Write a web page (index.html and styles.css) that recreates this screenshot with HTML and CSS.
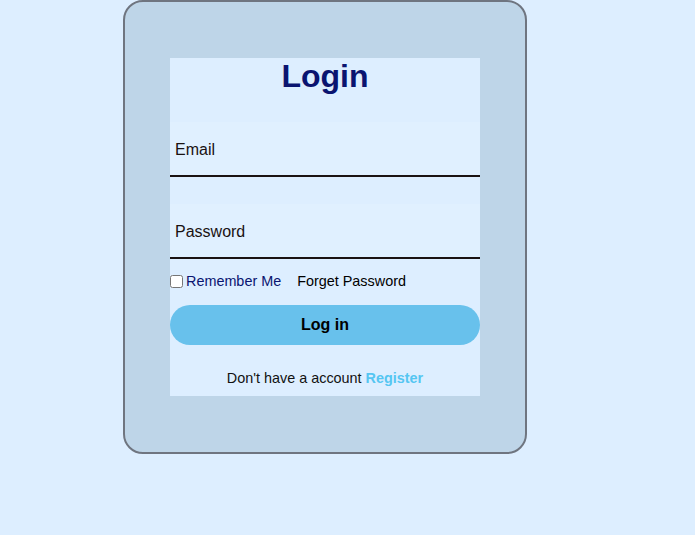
FILE: index.html
```html
<!DOCTYPE html>
<html>
<head>
<meta charset="utf-8">
<link rel="stylesheet" href="styles.css">
</head>
<body>
<div class="card">
  <form class="login">
    <h1 class="title">Login</h1>
    <input class="field field-email" type="email" placeholder="Email">
    <input class="field field-pass" type="password" placeholder="Password">
    <div class="options">
      <label class="remember"><input type="checkbox" class="check">Remember Me</label>
      <a class="forget">Forget Password</a>
    </div>
    <button type="button" class="btn">Log in</button>
    <p class="register">Don't have a account <a class="reg-link">Register</a></p>
  </form>
</div>
</body>
</html>
```

FILE: styles.css
```css
html, body {
  margin: 0;
  padding: 0;
  background: #ddeeff;
  font-family: "Liberation Sans", Arial, sans-serif;
}
.card {
  box-sizing: border-box;
  width: 404px;
  height: 454px;
  margin-left: 123px;
  background: #bed5e8;
  border: 2px solid #6f7580;
  border-radius: 20px;
  padding: 56px 45px;
}
.login {
  background: #ddeeff;
  display: flex;
  flex-direction: column;
  padding-bottom: 10px;
}
.title {
  margin: 0;
  font-size: 32px;
  line-height: 37px;
  text-align: center;
  color: #0a1470;
  font-weight: bold;
}
.field {
  box-sizing: border-box;
  width: 100%;
  height: 55px;
  border: none;
  border-bottom: 2px solid #1a1212;
  background: #e0f0ff;
  padding: 2px 5px 0;
  font-family: "Liberation Sans", Arial, sans-serif;
  font-size: 16px;
  color: #111;
  outline: none;
}
.field::placeholder {
  color: #1a1212;
  opacity: 1;
}
.field-email { margin-top: 27px; }
.field-pass { margin-top: 27px; }
.options {
  display: flex;
  align-items: center;
  margin-top: 14px;
  font-size: 14.4px;
  line-height: 17px;
}
.remember {
  display: flex;
  align-items: center;
  color: #0a1470;
}
.check {
  width: 13px;
  height: 13px;
  margin: 0 3px 0 0;
}
.forget {
  margin-left: 16px;
  color: #000;
}
.btn {
  margin-top: 15px;
  height: 40px;
  border: none;
  border-radius: 20px;
  background: #68c1ec;
  font-family: "Liberation Sans", Arial, sans-serif;
  font-weight: bold;
  font-size: 16px;
  color: #000;
}
.register {
  margin: 25px 0 0;
  text-align: center;
  font-size: 14.4px;
  line-height: 16px;
  color: #111;
}
.reg-link {
  color: #55c6f2;
  font-weight: bold;
}
```
